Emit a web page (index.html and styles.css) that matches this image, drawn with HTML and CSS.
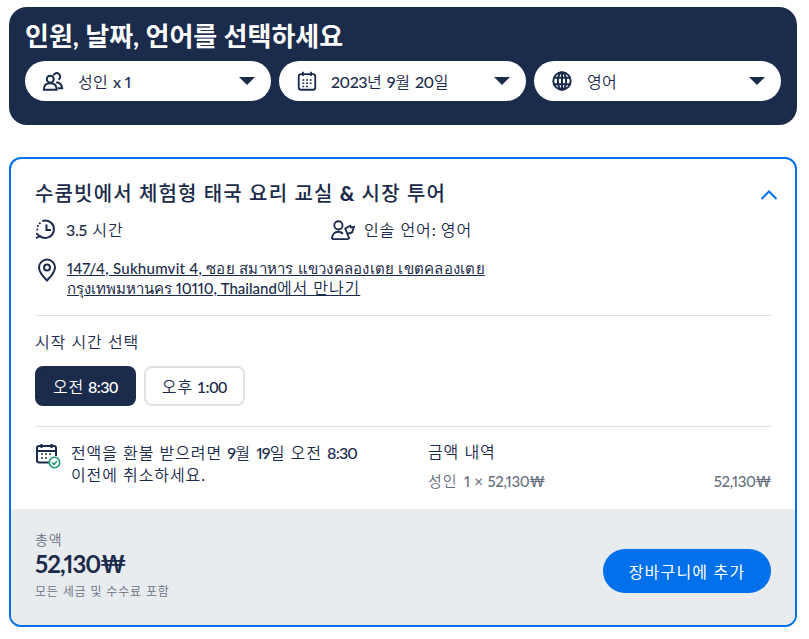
FILE: index.html
```html
<!DOCTYPE html>
<html lang="ko">
<head>
  <meta charset="UTF-8" />
  <title>수쿰빗 요리 교실</title>
  <link rel="stylesheet" href="styles.css">
</head>
<body>
  <section class="picker">
    <h1>인원, 날짜, 언어를 선택하세요</h1>
    <div class="picker-row">
      <div class="pill">
        <svg class="icon" viewBox="0 0 24 24" fill="none" stroke="#1b2b4b" stroke-width="2.200"><circle cx="9" cy="10" r="3.800"/><path d="M2 21.500c0-4.500 2.500-7 7-7s7 2.500 7 7z"/><path d="M12.500 6a3.800 3.800 0 1 1 5.500 4.500M15.500 13.500c3.500 0 6 2.500 6.500 6.500h-5"/></svg>
        <span class="pill-text">성인 <b>x 1</b></span>
        <span class="caret"></span>
      </div>
      <div class="pill pill-date">
        <svg class="icon" viewBox="0 0 24 24" fill="none" stroke="#1b2b4b" stroke-width="2"><rect x="3" y="4.500" width="18" height="17" rx="2.500"/><path d="M7.500 2v4.500M16.500 2v4.500"/><path d="M7 11h2M11 11h2M15 11h2M7 14.500h2M11 14.500h2M15 14.500h2M7 18h2M11 18h2" stroke-width="1.600"/></svg>
        <span class="pill-text"><span class="lt">2023</span>년 <span class="lt">9</span>월 <span class="lt">20</span>일</span>
        <span class="caret"></span>
      </div>
      <div class="pill">
        <svg class="icon" viewBox="0 0 24 24" fill="none" stroke="#1b2b4b" stroke-width="2.200"><circle cx="12" cy="12" r="9.500"/><ellipse cx="12" cy="12" rx="4.500" ry="9.500"/><path d="M3 8.500h18M3 15.500h18M12 2.500v19"/></svg>
        <span class="pill-text">영어</span>
        <span class="caret"></span>
      </div>
    </div>
  </section>

  <section class="tour">
    <div class="tour-body">
      <div class="tour-head">
        <h2>수쿰빗에서 체험형 태국 요리 교실 <span class="amp">&amp;</span> 시장 투어</h2>
        <svg class="chevron" viewBox="0 0 18 10" fill="none" stroke="#0070eb" stroke-width="2"><path d="M1.500 9 9 1.500 16.500 9"/></svg>
      </div>
      <div class="facts">
        <div class="fact fact-time">
          <svg class="icon" viewBox="0 0 24 24" fill="none" stroke="#1b2b4b" stroke-width="2.200"><path d="M8 3.200A9.500 9.500 0 1 1 5 19.500"/><path d="M12.500 7v6h5"/><path d="M1.500 16.500 5 20l-4 2" stroke-width="2"/><path d="M2.500 12.500h.1M3.200 8.800h.1M5.200 5.600h.1" stroke-linecap="round"/></svg>
          <span><b>3.5</b> 시간</span>
        </div>
        <div class="fact">
          <svg class="icon icon-guide" viewBox="0 0 26 24" fill="none" stroke="#1b2b4b" stroke-width="2"><circle cx="8" cy="8" r="4.500"/><path d="M1 23c0-5 3-8 7-8 2 0 3.500.8 5 2.200M1 23h18"/><path d="M20 23 15.500 11.500 21 8.500l1 2 3-1-2 6-5.500 2"/></svg>
          <span>인솔 언어<b>:</b> 영어</span>
        </div>
      </div>
      <div class="meet">
        <svg class="icon icon-pin" viewBox="0 0 20 24" fill="none" stroke="#1b2b4b" stroke-width="2"><path d="M10 22.500C5 17.500 2 14 2 9.500a8 8 0 0 1 16 0c0 4.500-3 8-8 13z"/><circle cx="10" cy="9.500" r="3"/></svg>
        <a class="meet-link" href="#"><b>147/4, Sukhumvit 4, ซอย สมาหาร แขวงคลองเตย เขตคลองเตย</b><br><b class="meet-city">กรุงเทพมหานคร 10110, Thailand</b>에서 만나기</a>
      </div>

      <hr class="rule rule-first">

      <p class="label">시작 시간 선택</p>
      <div class="times">
        <button class="time time-on">오전 <b>8:30</b></button>
        <button class="time">오후 <b>1:00</b></button>
      </div>

      <hr class="rule rule-second">

      <div class="details">
        <div class="refund">
          <svg class="icon-refund" viewBox="0 0 26 26" fill="none" stroke="#1b2b4b" stroke-width="2"><path d="M16 19.500H4a2 2 0 0 1-2-2V5a2 2 0 0 1 2-2h15a2 2 0 0 1 2 2v8"/><path d="M6.500 1v4M16.500 1v4M2 8h19" /><path d="M6 11h2M10 11h2M14 11h2M6 15h2M10 15h2" stroke-width="1.500"/><circle cx="19.500" cy="19.500" r="5.200" fill="#fff" stroke="#1f9a6b" stroke-width="1.600"/><path d="m17 19.500 2 2 3-3.500" stroke="#1f9a6b" stroke-width="1.600"/></svg>
          <p>전액을 환불 받으려면 <b>9</b>월 <b>19</b>일 오전 <b>8:30</b><br>이전에 취소하세요<b>.</b></p>
        </div>
        <div class="price-box">
          <p class="label">금액 내역</p>
          <div class="price-line">
            <span>성인 <b>1 × 52,130₩</b></span>
            <b>52,130₩</b>
          </div>
        </div>
      </div>
    </div>

    <div class="tour-foot">
      <div class="total">
        <span class="total-label">총액</span>
        <strong class="total-price">52,130₩</strong>
        <span class="total-note">모든 세금 및 수수료 포함</span>
      </div>
      <button class="add-cart">장바구니에 추가</button>
    </div>
  </section>
</body>
</html>
```

FILE: styles.css
```css
* {
  box-sizing: border-box;
}

body {
  font-family: 'Lato', 'Noto Sans CJK KR', sans-serif;
  font-variant-numeric: proportional-nums;
  font-weight: 350;
  letter-spacing: 0.9px;
  color: #1b2b4b;
  background-color: white;
  margin: 0;
  padding: 7px 12px 0 9px;
}

h1, h2, p {
  margin: 0;
}

/* latin runs sit tighter than the hangul around them */
b, .lt {
  font-weight: 500;
  letter-spacing: -0.2px;
}

.icon {
  width: 22px;
  height: 22px;
  flex: none;
}

/* top panel */
.picker {
  height: 118px;
  background-color: #1b2b4b;
  border-radius: 18px;
  padding: 14px 16px 0;
}

.picker h1 {
  color: white;
  font-size: 26px;
  line-height: 30px;
  font-weight: 700;
  letter-spacing: 0;
}

.picker-row {
  display: grid;
  grid-template-columns: 246px 247px 247px;
  gap: 8px;
  margin-top: 10px;
}

.pill {
  height: 40px;
  background: white;
  border-radius: 20px;
  display: flex;
  align-items: center;
  padding: 0 16px 0 17px;
}

.pill-text {
  flex: 1;
  margin-left: 14px;
  font-size: 16px;
  letter-spacing: 0.4px;
}

.pill-date .pill-text {
  margin-left: 13px;
}

.pill-date .lt {
  letter-spacing: -0.5px;
}

.caret {
  width: 0;
  height: 0;
  border-left: 8px solid transparent;
  border-right: 8px solid transparent;
  border-top: 8px solid #1b2b4b;
}

/* tour card */
.tour {
  margin-top: 32px;
  height: 470px;
  border: 2px solid #0070eb;
  border-radius: 12px;
  overflow: hidden;
  display: flex;
  flex-direction: column;
}

.tour-body {
  flex: 1;
  padding: 20px 24px 0;
}

.tour-head {
  display: flex;
  justify-content: space-between;
  align-items: center;
  height: 28px;
}

.tour-head h2 {
  font-size: 20px;
  font-weight: 500;
  line-height: 28px;
  letter-spacing: 1.15px;
}

.amp {
  font-weight: 900;
}

.chevron {
  width: 18px;
  height: 10px;
  margin-right: -7px;
  margin-top: 4px;
}

.facts {
  display: flex;
  margin-top: 10px;
  font-size: 16px;
}

.fact {
  display: flex;
  align-items: center;
  gap: 9px;
  height: 24px;
}

.fact-time {
  width: 296px;
}

.icon-guide {
  width: 24px;
}

.meet {
  display: flex;
  gap: 10px;
  margin-top: 17px;
  padding-left: 2px;
}

.icon-pin {
  width: 20px;
  height: 24px;
}

.meet-link {
  color: #1b2b4b;
  font-size: 16px;
  line-height: 20px;
}

.meet-link b {
  font-size: 15px;
  letter-spacing: 0.25px;
}

.meet-link .meet-city {
  letter-spacing: 0;
}

.rule {
  border: none;
  border-top: 1px solid #dfe1e5;
  margin: 0;
}

.rule-first {
  margin-top: 17px;
}

.label {
  font-size: 16px;
  line-height: 24px;
}

.rule-first + .label {
  margin-top: 14px;
}

.times {
  display: flex;
  gap: 8px;
  margin-top: 12px;
}

.time {
  height: 40px;
  padding: 0 16px;
  font-family: inherit;
  font-size: 16px;
  font-weight: 350;
  letter-spacing: 0.9px;
  word-spacing: -1.5px;
  color: #1b2b4b;
  background: white;
  border: 2px solid #dfe1e5;
  border-radius: 8px;
}

.time b {
  letter-spacing: -0.5px;
}

.time-on {
  background-color: #1b2b4b;
  border-color: #1b2b4b;
  color: white;
}

.rule-second {
  margin-top: 20px;
}

.details {
  display: flex;
  margin-top: 14px;
}

.refund {
  display: flex;
  gap: 10px;
  width: 393px;
  font-size: 16px;
  line-height: 22px;
}

.refund p {
  margin-top: 1px;
}

.refund b {
  letter-spacing: -0.8px;
}

.icon-refund {
  width: 26px;
  height: 26px;
  flex: none;
  margin-top: 2px;
}

.price-box {
  flex: 1;
  margin-top: -1px;
}

.price-line {
  display: flex;
  justify-content: space-between;
  margin-top: 7px;
  color: #68707f;
  font-size: 15px;
  line-height: 20px;
}

.price-line b {
  letter-spacing: -0.4px;
}

.price-line span {
  word-spacing: 1.5px;
}

/* footer */
.tour-foot {
  height: 116px;
  background-color: #e9ecef;
  display: flex;
  justify-content: space-between;
  align-items: center;
  padding: 0 24px;
}

.total {
  display: flex;
  flex-direction: column;
  margin-top: -2px;
}

.total-label {
  color: #68707f;
  font-size: 14px;
  line-height: 18px;
}

.total-note {
  color: #68707f;
  font-size: 12px;
  letter-spacing: 0.8px;
  line-height: 18px;
  margin-top: 4px;
}

.total-price {
  font-size: 24px;
  font-weight: 700;
  line-height: 30px;
  letter-spacing: -1px;
}

.add-cart {
  width: 168px;
  height: 44px;
  margin-top: 8px;
  background-color: #0070eb;
  color: white;
  font-family: inherit;
  font-size: 16px;
  font-weight: 400;
  letter-spacing: 1.2px;
  border: none;
  border-radius: 22px;
}
```
